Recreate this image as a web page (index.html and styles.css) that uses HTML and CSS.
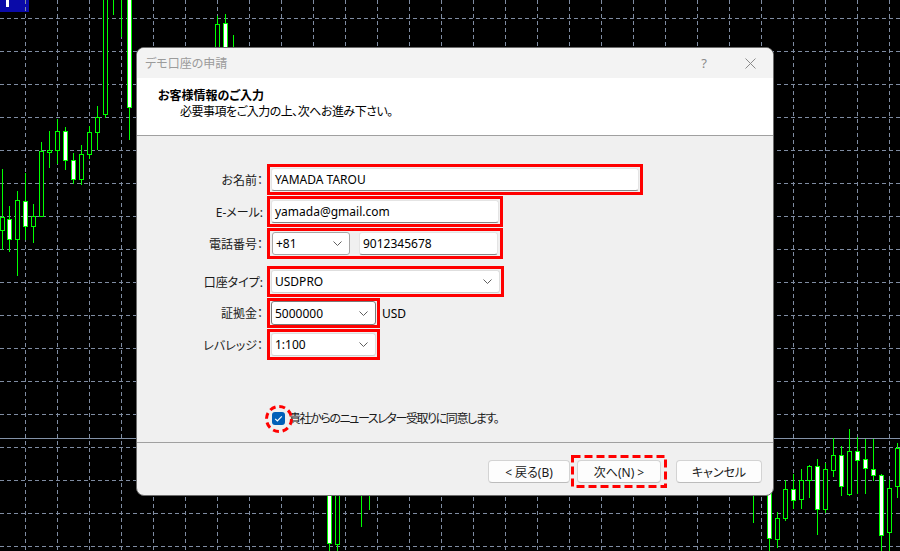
FILE: index.html
```html
<!DOCTYPE html>
<html lang="ja">
<head>
<meta charset="utf-8">
<title>デモ口座の申請</title>
<link rel="stylesheet" href="styles.css">
</head>
<body>
<div class="screen">
  <svg class="chart" width="900" height="551" viewBox="0 0 900 551" xmlns="http://www.w3.org/2000/svg">
    <rect x="0" y="0" width="29" height="12" fill="#0a0aa8"/>
    <rect x="6" y="0" width="3" height="7" fill="#ffffff"/>
    <g stroke="#7f8ca2" stroke-width="1" stroke-dasharray="4 3">
      <line x1="25.5" y1="0" x2="25.5" y2="551"/><line x1="57.5" y1="0" x2="57.5" y2="551"/>
      <line x1="89.5" y1="0" x2="89.5" y2="551"/><line x1="121.5" y1="0" x2="121.5" y2="551"/>
      <line x1="153.5" y1="0" x2="153.5" y2="551"/><line x1="185.5" y1="0" x2="185.5" y2="551"/>
      <line x1="217.5" y1="0" x2="217.5" y2="551"/><line x1="249.5" y1="0" x2="249.5" y2="551"/>
      <line x1="281.5" y1="0" x2="281.5" y2="551"/><line x1="313.5" y1="0" x2="313.5" y2="551"/>
      <line x1="345.5" y1="0" x2="345.5" y2="551"/><line x1="377.5" y1="0" x2="377.5" y2="551"/>
      <line x1="409.5" y1="0" x2="409.5" y2="551"/><line x1="441.5" y1="0" x2="441.5" y2="551"/>
      <line x1="473.5" y1="0" x2="473.5" y2="551"/><line x1="505.5" y1="0" x2="505.5" y2="551"/>
      <line x1="537.5" y1="0" x2="537.5" y2="551"/><line x1="569.5" y1="0" x2="569.5" y2="551"/>
      <line x1="601.5" y1="0" x2="601.5" y2="551"/><line x1="633.5" y1="0" x2="633.5" y2="551"/>
      <line x1="665.5" y1="0" x2="665.5" y2="551"/><line x1="697.5" y1="0" x2="697.5" y2="551"/>
      <line x1="729.5" y1="0" x2="729.5" y2="551"/><line x1="761.5" y1="0" x2="761.5" y2="551"/>
      <line x1="793.5" y1="0" x2="793.5" y2="551"/><line x1="825.5" y1="0" x2="825.5" y2="551"/>
      <line x1="857.5" y1="0" x2="857.5" y2="551"/><line x1="889.5" y1="0" x2="889.5" y2="551"/>
      <line x1="0" y1="18.5" x2="900" y2="18.5"/><line x1="0" y1="51.5" x2="900" y2="51.5"/>
      <line x1="0" y1="84.5" x2="900" y2="84.5"/><line x1="0" y1="117.5" x2="900" y2="117.5"/>
      <line x1="0" y1="150.5" x2="900" y2="150.5"/><line x1="0" y1="183.5" x2="900" y2="183.5"/>
      <line x1="0" y1="216.5" x2="900" y2="216.5"/><line x1="0" y1="249.5" x2="900" y2="249.5"/>
      <line x1="0" y1="282.5" x2="900" y2="282.5"/><line x1="0" y1="315.5" x2="900" y2="315.5"/>
      <line x1="0" y1="348.5" x2="900" y2="348.5"/><line x1="0" y1="381.5" x2="900" y2="381.5"/>
      <line x1="0" y1="414.5" x2="900" y2="414.5"/><line x1="0" y1="447.5" x2="900" y2="447.5"/>
      <line x1="0" y1="480.5" x2="900" y2="480.5"/><line x1="0" y1="513.5" x2="900" y2="513.5"/>
      <line x1="0" y1="546.5" x2="900" y2="546.5"/>
    </g>
    <line x1="0" y1="438.5" x2="900" y2="438.5" stroke="#8392a8" stroke-width="1"/>
    <g stroke="#00ff00" stroke-width="1">
      <line x1="2.5" y1="169" x2="2.5" y2="250"/><rect x="0.5" y="217.5" width="4" height="13" fill="#000"/>
      <line x1="9.5" y1="206" x2="9.5" y2="252"/><rect x="7.5" y="219.5" width="4" height="20" fill="#fff"/>
      <line x1="17.5" y1="191" x2="17.5" y2="276"/><rect x="15.5" y="200.5" width="4" height="39" fill="#000"/>
      <line x1="25.5" y1="173" x2="25.5" y2="240"/><rect x="23.5" y="201.5" width="4" height="25" fill="#fff"/>
      <line x1="33.5" y1="204" x2="33.5" y2="243"/><rect x="31.5" y="216.5" width="4" height="10" fill="#000"/>
      <line x1="41.5" y1="142" x2="41.5" y2="216"/><rect x="39.5" y="151.5" width="4" height="65" fill="#000"/>
      <line x1="49.5" y1="131" x2="49.5" y2="168"/><rect x="47.5" y="150.5" width="4" height="2" fill="#000"/>
      <line x1="57.5" y1="119" x2="57.5" y2="164"/><rect x="55.5" y="131.5" width="4" height="19" fill="#000"/>
      <line x1="65.5" y1="127" x2="65.5" y2="170"/><rect x="63.5" y="131.5" width="4" height="29" fill="#fff"/>
      <line x1="73.5" y1="153" x2="73.5" y2="184"/><rect x="71.5" y="160.5" width="4" height="19" fill="#fff"/>
      <line x1="81.5" y1="145" x2="81.5" y2="185"/><rect x="79.5" y="154.5" width="4" height="25" fill="#000"/>
      <line x1="89.5" y1="126" x2="89.5" y2="159"/><rect x="87.5" y="132.5" width="4" height="22" fill="#000"/>
      <line x1="97.5" y1="106" x2="97.5" y2="150"/><rect x="95.5" y="117.5" width="4" height="15" fill="#000"/>
      <line x1="105.5" y1="0" x2="105.5" y2="118"/><rect x="103.5" y="-1" width="4" height="115.5" fill="#000"/>
      <line x1="113.5" y1="0" x2="113.5" y2="15"/>
      <line x1="121.5" y1="0" x2="121.5" y2="37"/>
      <line x1="129.5" y1="0" x2="129.5" y2="140"/><rect x="127.5" y="-1" width="4" height="108.5" fill="#fff"/>
      <line x1="217.5" y1="16" x2="217.5" y2="60"/><rect x="215.5" y="24.5" width="4" height="36" fill="#000"/>
      <line x1="225.5" y1="14" x2="225.5" y2="60"/><rect x="223.5" y="23.5" width="4" height="37" fill="#fff"/>
      <line x1="233.5" y1="35" x2="233.5" y2="60"/>
      <line x1="329.5" y1="490" x2="329.5" y2="551"/><rect x="327.5" y="490.5" width="4" height="53" fill="#fff"/>
      <line x1="337.5" y1="490" x2="337.5" y2="551"/><rect x="335.5" y="490.5" width="4" height="54" fill="#000"/>
      <line x1="361.5" y1="490" x2="361.5" y2="527"/>
      <line x1="369.5" y1="490" x2="369.5" y2="510"/>
      <line x1="753.5" y1="490" x2="753.5" y2="523"/>
      <line x1="769.5" y1="490" x2="769.5" y2="551"/><rect x="767.5" y="490.5" width="4" height="48" fill="#fff"/>
      <line x1="777.5" y1="512" x2="777.5" y2="548"/><rect x="775.5" y="518.5" width="4" height="21" fill="#000"/>
      <line x1="785.5" y1="480" x2="785.5" y2="521"/><rect x="783.5" y="489.5" width="4" height="29" fill="#000"/>
      <line x1="793.5" y1="474" x2="793.5" y2="509"/><rect x="791.5" y="489.5" width="4" height="11" fill="#fff"/>
      <line x1="801.5" y1="469" x2="801.5" y2="509"/><rect x="799.5" y="480.5" width="4" height="19" fill="#000"/>
      <line x1="809.5" y1="465" x2="809.5" y2="498"/><rect x="807.5" y="466.5" width="4" height="14" fill="#000"/>
      <line x1="817.5" y1="459" x2="817.5" y2="535"/><rect x="815.5" y="466.5" width="4" height="43" fill="#fff"/>
      <line x1="825.5" y1="463" x2="825.5" y2="513"/><rect x="823.5" y="469.5" width="4" height="40" fill="#000"/>
      <line x1="833.5" y1="438" x2="833.5" y2="477"/><rect x="831.5" y="455.5" width="4" height="15" fill="#000"/>
      <line x1="841.5" y1="446" x2="841.5" y2="496"/><rect x="839.5" y="455.5" width="4" height="31" fill="#fff"/>
      <line x1="849.5" y1="429" x2="849.5" y2="496"/><rect x="847.5" y="451.5" width="4" height="43" fill="#000"/>
      <line x1="857.5" y1="437" x2="857.5" y2="494"/><rect x="855.5" y="451.5" width="4" height="9" fill="#fff"/>
      <line x1="865.5" y1="439" x2="865.5" y2="494"/><rect x="863.5" y="459.5" width="4" height="9" fill="#fff"/>
      <line x1="873.5" y1="439" x2="873.5" y2="481"/><rect x="871.5" y="469.5" width="4" height="6" fill="#fff"/>
      <line x1="881.5" y1="474" x2="881.5" y2="551"/><rect x="879.5" y="475.5" width="4" height="60" fill="#fff"/>
      <line x1="889.5" y1="480" x2="889.5" y2="551"/><rect x="887.5" y="488.5" width="4" height="44" fill="#000"/>
      <line x1="897.5" y1="443" x2="897.5" y2="498"/><rect x="895.5" y="448.5" width="4" height="38" fill="#000"/>
    </g>
  </svg>

  <div class="dialog">
    <div class="titlebar">
      <span class="title">デモ口座の申請</span>
      <span class="tb-btn tb-help">?</span>
      <span class="tb-btn">
        <svg class="tb-close" width="11" height="11" viewBox="0 0 11 11"><path d="M0.5 0.5 L10.5 10.5 M10.5 0.5 L0.5 10.5" stroke="#8a8a8a" stroke-width="1" fill="none"/></svg>
      </span>
    </div>
    <div class="header">
      <div class="h-title">お客様情報のご入力</div>
      <div class="h-sub">必要事項をご入力の上、次へお進み下さい。</div>
    </div>
    <div class="body">
      <div class="row">
        <span class="lbl">お名前：</span>
        <div class="hl w-name"><div class="tb">YAMADA TAROU</div></div>
      </div>
      <div class="row">
        <span class="lbl">E-メール:</span>
        <div class="hl w-mid"><div class="tb">yamada@gmail.com</div></div>
      </div>
      <div class="row">
        <span class="lbl">電話番号：</span>
        <div class="hl w-mid">
          <div class="cb cb-mid w-code"><span>+81</span><svg class="chev" width="9" height="5" viewBox="0 0 9 5"><path d="M0.5 0.5 L4.5 4.5 L8.5 0.5" stroke="#5f5f5f" fill="none"/></svg></div>
          <div class="tb tb-phone">9012345678</div>
        </div>
      </div>
      <div class="row row-gap">
        <span class="lbl">口座タイプ:</span>
        <div class="hl w-acct"><div class="cb cb-light grow"><span>USDPRO</span><svg class="chev" width="9" height="5" viewBox="0 0 9 5"><path d="M0.5 0.5 L4.5 4.5 L8.5 0.5" stroke="#5f5f5f" fill="none"/></svg></div></div>
      </div>
      <div class="row row-30">
        <span class="lbl">証拠金：</span>
        <div class="hl w-small h30"><div class="cb cb-dark grow"><span>5000000</span><svg class="chev" width="9" height="5" viewBox="0 0 9 5"><path d="M0.5 0.5 L4.5 4.5 L8.5 0.5" stroke="#5f5f5f" fill="none"/></svg></div></div>
        <span class="unit">USD</span>
      </div>
      <div class="row">
        <span class="lbl">レバレッジ：</span>
        <div class="hl w-small"><div class="cb cb-light grow"><span>1:100</span><svg class="chev" width="9" height="5" viewBox="0 0 9 5"><path d="M0.5 0.5 L4.5 4.5 L8.5 0.5" stroke="#5f5f5f" fill="none"/></svg></div></div>
      </div>
      <div class="agree">
        <span class="chk-wrap">
          <span class="chk"><svg width="13" height="13" viewBox="0 0 13 13"><path d="M3.2 6.8 L5.4 9 L9.8 4.4" stroke="#fff" stroke-width="1.2" fill="none"/></svg></span>
          <svg class="ring" width="30" height="30" viewBox="0 0 30 30"><circle cx="15" cy="15" r="12.5" stroke="#ff0000" stroke-width="3" fill="none" stroke-dasharray="6 3.8"/></svg>
        </span>
        <span class="agree-text">貴社からのニュースレター受取りに同意します。</span>
      </div>
    </div>
    <div class="footer">
      <button class="btn w-back">&lt; 戻る(B)</button>
      <span class="focus">
        <button class="btn w-next">次へ(N) &gt;</button>
        <svg class="focus-ring" width="96" height="33" viewBox="0 0 96 33"><rect x="1.5" y="1.5" width="93" height="30" stroke="#ff0000" stroke-width="3" fill="none" stroke-dasharray="8 4"/></svg>
      </span>
      <button class="btn w-cancel">キャンセル</button>
    </div>
  </div>
</div>
</body>
</html>
```

FILE: styles.css
```css
* { box-sizing: border-box; }

body {
  margin: 0;
  background: #000;
  font-family: "Noto Sans", "Noto Sans CJK JP", sans-serif;
  font-size: 12px;
  font-feature-settings: "palt";
  color: #000;
}

.screen {
  position: relative;
  width: 900px;
  height: 551px;
  overflow: hidden;
  background: #000;
}

.chart {
  position: absolute;
  left: 0;
  top: 0;
  display: block;
}

.dialog {
  position: absolute;
  left: 136px;
  top: 47px;
  width: 638px;
  height: 449px;
  border: 1px solid #6c6c6c;
  border-radius: 8px;
  background: #f0f0f0;
  display: flex;
  flex-direction: column;
  overflow: hidden;
}

.titlebar {
  height: 30px;
  flex: none;
  background: #f3f3f3;
  display: flex;
  align-items: center;
  padding-left: 8px;
  color: #9b9b9b;
  font-size: 12px;
}

.title { flex: 1; }

.tb-btn {
  width: 46px;
  height: 30px;
  display: flex;
  align-items: center;
  justify-content: center;
  color: #8a8a8a;
  font-size: 13px;
}

.tb-close { display: block; }

.header {
  height: 58px;
  flex: none;
  background: #fff;
  border-bottom: 1px solid #a0a0a0;
  padding: 10px 0 0 21px;
  line-height: 16px;
}

.h-title { font-weight: bold; }
.h-sub { padding-left: 22px; letter-spacing: -0.5px; }

.body {
  height: 307px;
  flex: none;
  border-bottom: 1px solid #a0a0a0;
  padding-top: 28px;
}

.row {
  display: flex;
  align-items: center;
  height: 31px;
  margin-bottom: 1px;
}

.row-gap { margin-top: 7px; }
.row-30 { height: 30px; }

.lbl {
  width: 126px;
  margin-right: 4px;
  text-align: right;
  white-space: nowrap;
  color: #1a1a1a;
}

.hl {
  height: 31px;
  border: 3px solid #ff0000;
  padding: 1px;
  display: flex;
  align-items: center;
}

.h30 { height: 30px; }

.w-name { width: 376px; }
.w-mid { width: 236px; }
.w-acct { width: 237px; }
.w-small { width: 113px; }

.tb {
  flex: 1;
  height: 23px;
  background: #fff;
  border: 1px solid #e4e4e4;
  border-bottom-color: #868686;
  border-radius: 3px;
  padding-left: 3px;
  display: flex;
  align-items: center;
  white-space: nowrap;
}

.tb-phone {
  flex: none;
  width: 139px;
  margin-left: 9px;
}

.cb {
  height: 23px;
  background: #fff;
  border: 1px solid #dcdcdc;
  border-radius: 3px;
  display: flex;
  align-items: center;
  justify-content: space-between;
  padding: 0 7px 0 3px;
  white-space: nowrap;
}

.grow { flex: 1; }
.w-code { width: 78px; flex: none; margin-left: 1px; }
.cb-mid { border-color: #a6a6a6; }
.cb-light { border-color: #dedede; border-bottom-color: #cfcfcf; }
.cb-dark { border-color: #7a7a7a; height: 24px; }

.chev { display: block; flex: none; }

.unit {
  margin-left: 2px;
}

.agree {
  display: flex;
  align-items: center;
  height: 16px;
  margin-top: 50px;
  padding-left: 135px;
}

.chk-wrap {
  position: relative;
  width: 13px;
  height: 13px;
  margin-right: 4px;
}

.chk {
  display: block;
  width: 13px;
  height: 13px;
  background: #005fb8;
  border-radius: 3px;
}

.chk svg { display: block; }

.ring {
  position: absolute;
  left: -8px;
  top: -8px;
}

.agree-text {
  white-space: nowrap;
  color: #1a1a1a;
  letter-spacing: -1.4px;
}

.footer {
  flex: 1;
  display: flex;
  justify-content: flex-end;
  align-items: flex-start;
  padding: 12px 11px 0 0;
}

.btn {
  height: 23px;
  border: 1px solid #d3d3d3;
  border-bottom-color: #bcbcbc;
  border-radius: 4px;
  background: #fdfdfd;
  font-family: "Noto Sans", "Noto Sans CJK JP", sans-serif;
  font-size: 12px;
  font-feature-settings: "palt";
  color: #1a1a1a;
  padding: 0;
  display: flex;
  align-items: center;
  justify-content: center;
  white-space: nowrap;
}

.w-back { width: 82px; margin-top: 5px; margin-right: 1px; }
.w-next { width: 84px; }
.w-cancel { width: 86px; margin-top: 5px; margin-left: 9px; }

.focus {
  position: relative;
  display: block;
  padding: 5px 6px;
}

.focus-ring {
  position: absolute;
  left: 0;
  top: 0;
}
```
